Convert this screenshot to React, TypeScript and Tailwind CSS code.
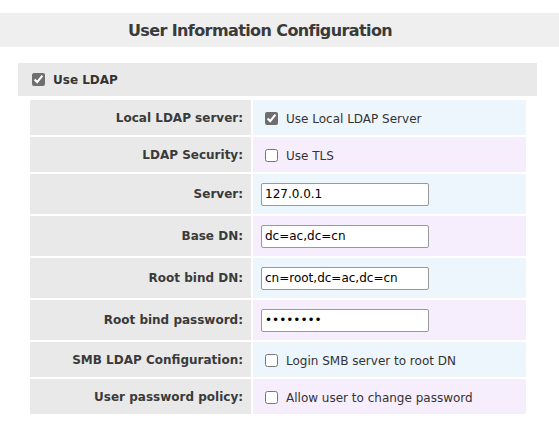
import React from "react";

const font = { fontFamily: '"DejaVu Sans", Verdana, sans-serif' };

type Row =
  | { label: string; kind: "check"; text: string; checked?: boolean }
  | { label: string; kind: "input"; value: string; password?: boolean };

const rows: Row[] = [
  { label: "Local LDAP server:", kind: "check", text: "Use Local LDAP Server", checked: true },
  { label: "LDAP Security:", kind: "check", text: "Use TLS" },
  { label: "Server:", kind: "input", value: "127.0.0.1" },
  { label: "Base DN:", kind: "input", value: "dc=ac,dc=cn" },
  { label: "Root bind DN:", kind: "input", value: "cn=root,dc=ac,dc=cn" },
  { label: "Root bind password:", kind: "input", value: "password", password: true },
  { label: "SMB LDAP Configuration:", kind: "check", text: "Login SMB server to root DN" },
  { label: "User password policy:", kind: "check", text: "Allow user to change password" },
];

function Check({ checked }: { checked?: boolean }) {
  return (
    <input
      type="checkbox"
      defaultChecked={checked}
      className="m-0 h-[13px] w-[13px] accent-[#6e6e6e]"
    />
  );
}

export default function App() {
  return (
    <div className="h-[430px] w-[559px] bg-white pt-[13px] text-[#333]" style={font}>
      <div className="flex h-[34px] items-center justify-center bg-[#efefef] pr-[39px]">
        <h1 className="pt-[1px] text-[16px] font-bold tracking-[-0.6px] text-[#3a3a3a]">
          User Information Configuration
        </h1>
      </div>

      <div className="ml-[18px] mt-[16px] flex h-[33px] w-[519px] items-center gap-[8px] bg-[#e9e9e9] pl-[14px]">
        <Check checked />
        <span className="text-[12px] font-bold text-[#333]">Use LDAP</span>
      </div>

      <div className="ml-[30px] mt-[4px] grid grid-cols-[221px_273px] gap-[2px]">
        {rows.map((r, i) => {
          const h = r.kind === "input" ? "h-[40px]" : "h-[35px]";
          const bg = i % 2 === 0 ? "bg-[#edf5fd]" : "bg-[#f7eefd]";
          return (
            <React.Fragment key={r.label}>
              <div
                className={`${h} flex items-center justify-end bg-[#e9e9e9] pr-[8px] text-[12px] font-bold text-[#3a3a3a]`}
              >
                {r.label}
              </div>
              <div className={`${h} ${bg} flex items-center`}>
                {r.kind === "check" ? (
                  <label className="ml-[12px] flex items-center gap-[8px] pt-[2px] text-[12px] text-[#333]">
                    <Check checked={r.checked} />
                    {r.text}
                  </label>
                ) : (
                  <input
                    type={r.password ? "password" : "text"}
                    defaultValue={r.value}
                    className="ml-[8px] h-[23px] w-[168px] rounded-[2px] border border-[#999] bg-white px-[3px] text-[12px] text-black outline-none"
                    style={font}
                  />
                )}
              </div>
            </React.Fragment>
          );
        })}
      </div>
    </div>
  );
}
